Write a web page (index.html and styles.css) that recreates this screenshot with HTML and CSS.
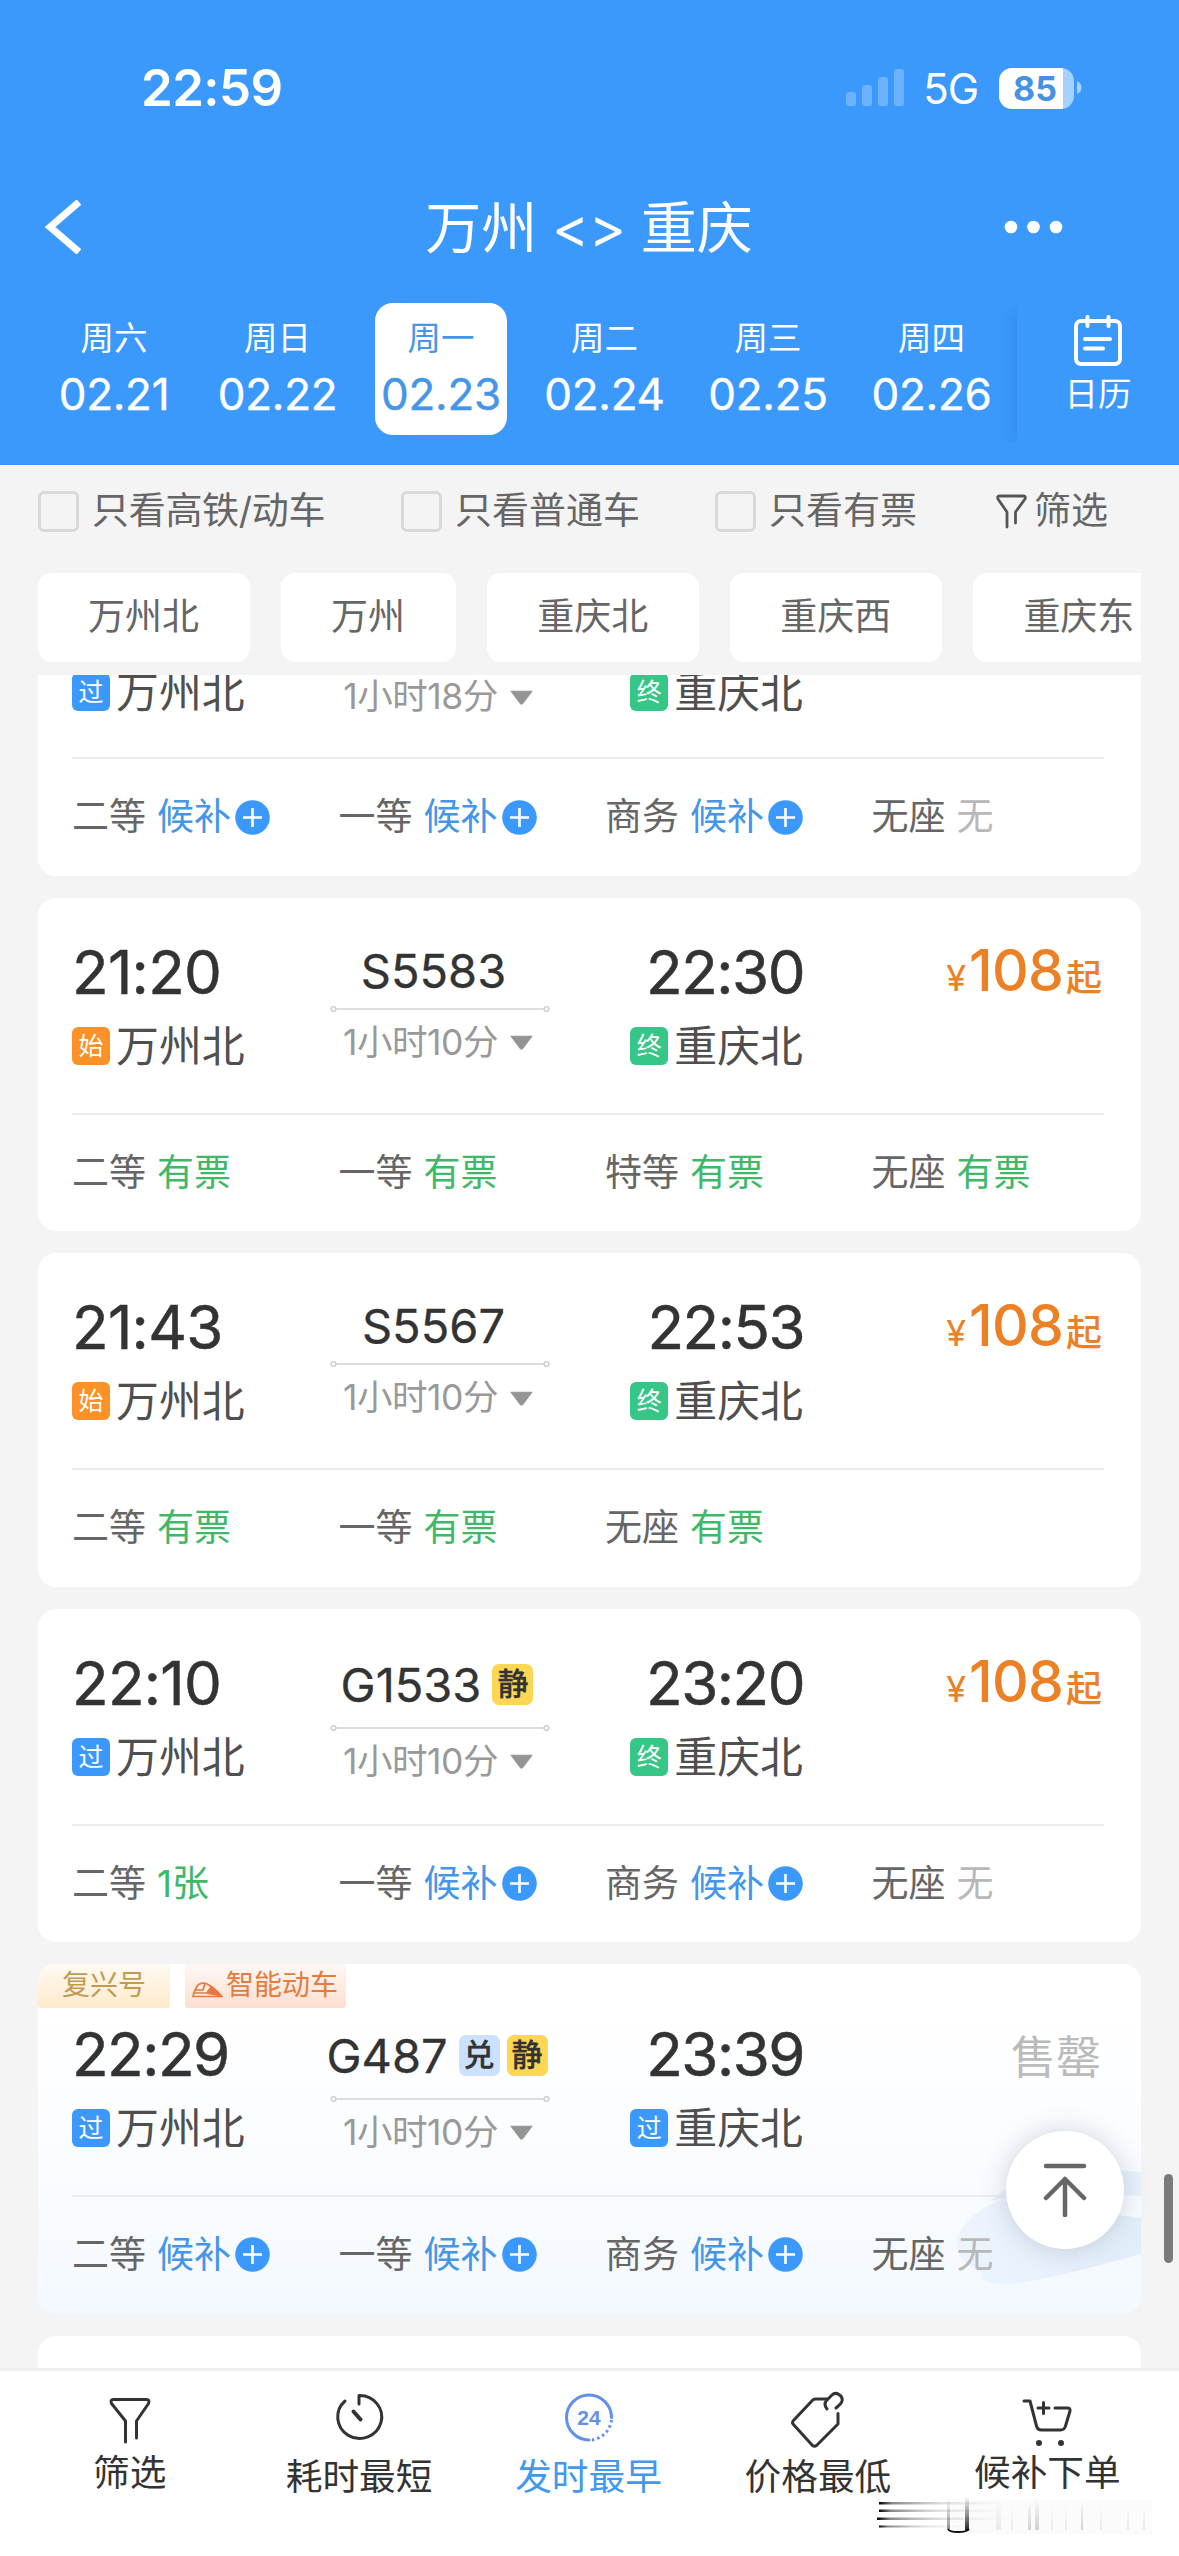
FILE: index.html
```html
<!DOCTYPE html>
<html lang="zh-CN">
<head>
<meta charset="utf-8">
<title>万州 &lt;&gt; 重庆</title>
<link rel="stylesheet" href="styles.css">
</head>
<body>
<svg class="defs" width="0" height="0">
  <symbol id="plus" viewBox="0 0 35 35"><circle cx="17.500" cy="17.500" r="17.300" fill="#3b99fc"/><path d="M8 17.500h19M17.500 8v19" stroke="#fff" stroke-width="2.600"/></symbol>
  <symbol id="rail" viewBox="0 0 220 8"><path d="M6 4h208" stroke="#d2d2d2" stroke-width="1.600"/><g fill="#fff" stroke="#cdcdcd" stroke-width="1.400"><circle cx="3.500" cy="4" r="2.400"/><circle cx="216.500" cy="4" r="2.400"/></g></symbol>
  <symbol id="tri" viewBox="0 0 22 14"><path d="M1 1h20L12 12.800q-1 1-2 0z" fill="#949494" stroke="#949494" stroke-linejoin="round"/></symbol>
</svg>
<div class="screen">
  <header class="header">
    <div class="status">
      <span class="clock">22:59</span>
      <div class="signals">
        <svg width="59" height="38" viewBox="0 0 59 38" fill="#6cb2ff"><rect y="23" width="10" height="14" rx="3"/><rect x="16" y="16" width="10" height="21" rx="3"/><rect x="32" y="8" width="10" height="29" rx="3"/><rect x="48" width="10" height="37" rx="3"/></svg>
        <span class="net">5G</span>
        <span class="battery"><span class="charge">85</span></span>
        <svg class="nub" width="5" height="14" viewBox="0 0 5 14"><path d="M0 0q4.500 2 4.500 6.500T0 13z" fill="#a5d0ff"/></svg>
      </div>
    </div>
    <div class="titlebar">
      <svg class="back" width="38" height="54" viewBox="0 0 38 54"><path d="M34 2 5 27l29 25" fill="none" stroke="#fff" stroke-width="7"/></svg>
      <h1>万州 &lt;&gt; 重庆</h1>
      <svg class="more" width="60" height="16" viewBox="0 0 60 16" fill="#fff"><circle cx="7" cy="8" r="6.300"/><circle cx="29.500" cy="8" r="6.300"/><circle cx="52" cy="8" r="6.300"/></svg>
    </div>
    <div class="dates">
      <div class="day"><span>周六</span><b>02.21</b></div>
      <div class="day"><span>周日</span><b>02.22</b></div>
      <div class="day on"><span>周一</span><b>02.23</b></div>
      <div class="day"><span>周二</span><b>02.24</b></div>
      <div class="day"><span>周三</span><b>02.25</b></div>
      <div class="day"><span>周四</span><b>02.26</b></div>
      <div class="calendar">
        <svg width="50" height="54" viewBox="0 0 50 54" fill="none" stroke="#fff" stroke-width="4" stroke-linecap="round"><rect x="3" y="9" width="44" height="43" rx="5"/><path d="M14.500 5v9M35.500 5v9"/><path d="M12 27h25M12 36.500h18"/></svg>
        <span>日历</span>
      </div>
    </div>
  </header>

  <div class="filters">
    <label class="f1"><i></i>只看高铁/动车</label>
    <label class="f2"><i></i>只看普通车</label>
    <label class="f3"><i></i>只看有票</label>
    <div class="sift"><svg width="31" height="35" viewBox="0 0 31 35" fill="none" stroke="#555" stroke-width="2.800" stroke-linecap="round" stroke-linejoin="round"><path d="M11 33V18L2 5q-1-3 1.500-3h24q2.500 0 1.500 3L19.500 18v11"/></svg>筛选</div>
  </div>
  <div class="chips"><span>万州北</span><span>万州</span><span>重庆北</span><span>重庆西</span><span>重庆东</span></div>

  <main class="list">
    <section class="card first">
      <div class="trip">
        <div class="from"><div class="station"><i class="pass">过</i>万州北</div></div>
        <div class="mid"><div class="dur">1小时18分<svg width="23" height="15"><use href="#tri"/></svg></div></div>
        <div class="to"><div class="station"><i class="end">终</i>重庆北</div></div>
      </div>
      <div class="seats"><div>二等<em class="wait">候补<svg><use href="#plus"/></svg></em></div><div>一等<em class="wait">候补<svg><use href="#plus"/></svg></em></div><div>商务<em class="wait">候补<svg><use href="#plus"/></svg></em></div><div>无座<em class="none">无</em></div></div>
    </section>

    <section class="card">
      <div class="trip">
        <div class="from"><div class="time wide">21:20</div><div class="station"><i class="start">始</i>万州北</div></div>
        <div class="mid"><div class="no">S5583</div><svg class="rail"><use href="#rail"/></svg><div class="dur">1小时10分<svg width="23" height="15"><use href="#tri"/></svg></div></div>
        <div class="to"><div class="time">22:30</div><div class="station"><i class="end">终</i>重庆北</div></div>
        <div class="price"><small>¥</small>108<sub>起</sub></div>
      </div>
      <div class="seats"><div>二等<em class="have">有票</em></div><div>一等<em class="have">有票</em></div><div>特等<em class="have">有票</em></div><div>无座<em class="have">有票</em></div></div>
    </section>

    <section class="card">
      <div class="trip">
        <div class="from"><div class="time wide">21:43</div><div class="station"><i class="start">始</i>万州北</div></div>
        <div class="mid"><div class="no">S5567</div><svg class="rail"><use href="#rail"/></svg><div class="dur">1小时10分<svg width="23" height="15"><use href="#tri"/></svg></div></div>
        <div class="to"><div class="time">22:53</div><div class="station"><i class="end">终</i>重庆北</div></div>
        <div class="price"><small>¥</small>108<sub>起</sub></div>
      </div>
      <div class="seats"><div>二等<em class="have">有票</em></div><div>一等<em class="have">有票</em></div><div>无座<em class="have">有票</em></div></div>
    </section>

    <section class="card">
      <div class="trip">
        <div class="from"><div class="time wide">22:10</div><div class="station"><i class="pass">过</i>万州北</div></div>
        <div class="mid tagged"><div class="no">G1533<i class="quiet">静</i></div><svg class="rail"><use href="#rail"/></svg><div class="dur">1小时10分<svg width="23" height="15"><use href="#tri"/></svg></div></div>
        <div class="to"><div class="time">23:20</div><div class="station"><i class="end">终</i>重庆北</div></div>
        <div class="price"><small>¥</small>108<sub>起</sub></div>
      </div>
      <div class="seats"><div>二等<em class="have">1张</em></div><div>一等<em class="wait">候补<svg><use href="#plus"/></svg></em></div><div>商务<em class="wait">候补<svg><use href="#plus"/></svg></em></div><div>无座<em class="none">无</em></div></div>
    </section>

    <section class="card smart">
      <svg class="train" width="190" height="130" viewBox="0 0 190 130">
        <defs><linearGradient id="body"><stop offset="0" stop-color="#edf4fe"/><stop offset="1" stop-color="#e2edfb"/></linearGradient></defs>
        <path d="M60 30Q110 8 190 16v24Q110 36 40 44z" fill="#e8f1fc"/><path d="M6 82Q18 56 50 44L190 62v36Q90 126 56 128q-30 0-24-10Q2 104 6 82z" fill="url(#body)"/></svg>
      <div class="labels"><span class="fx">复兴号</span><span class="zn"><svg width="31" height="16" viewBox="0 0 31 16" fill="none" stroke="#e57b3c" stroke-width="1.700"><path d="M1 14.500h29Q22 5 14 1.500 7 0 4 6 2 10 1 14.500z"/><path d="M3 8h8l2-6M2 11h13" /><path d="M15 9l4-5q7 4 10 10.500L15 12z" fill="#e57b3c" stroke="none"/></svg>智能动车</span></div>
      <div class="trip">
        <div class="from"><div class="time">22:29</div><div class="station"><i class="pass">过</i>万州北</div></div>
        <div class="mid tagged"><div class="no">G487<i class="swap">兑</i><i class="quiet">静</i></div><svg class="rail"><use href="#rail"/></svg><div class="dur">1小时10分<svg width="23" height="15"><use href="#tri"/></svg></div></div>
        <div class="to"><div class="time">23:39</div><div class="station"><i class="pass">过</i>重庆北</div></div>
        <div class="soldout">售罄</div>
      </div>
      <div class="seats"><div>二等<em class="wait">候补<svg><use href="#plus"/></svg></em></div><div>一等<em class="wait">候补<svg><use href="#plus"/></svg></em></div><div>商务<em class="wait">候补<svg><use href="#plus"/></svg></em></div><div>无座<em class="none">无</em></div></div>
    </section>
    <section class="card"></section>
  </main>

  <nav class="tabs">
    <div class="tab hi"><svg width="60" height="60" viewBox="0 0 60 60"><path d="M25.500 51V30L11.500 12.500Q10 8.500 13.500 8.500h33q3.500 0 2 4L36.500 30v17" /></svg><span>筛选</span></div>
    <div class="tab"><svg width="60" height="60" viewBox="0 0 60 60"><path d="M16 10A22 21.500 0 1 0 30 4.500V13"/><path d="m24.500 20.500 7 8" stroke-width="4"/></svg><span>耗时最短</span></div>
    <div class="tab on"><svg width="60" height="60" viewBox="0 0 60 60"><path d="M30 49A22.500 22.500 0 1 1 52.500 26.500" stroke="#628fea"/><path d="M52.500 29A22.500 22.500 0 0 1 32 49" stroke="#628fea" stroke-dasharray="2.500 3" stroke-linecap="butt"/><text x="30" y="33.500" text-anchor="middle">24</text></svg><span>发时最早</span></div>
    <div class="tab"><svg width="60" height="60" viewBox="0 0 60 60"><path d="M39 8H27.500q-2 0-3 1.200L5 30q-1 1.500 0 3l19.500 21.500q2 1.500 4 0L50 33V22.500"/><path d="M39 18q-4-5 0-9l5-5q3-3 7-.5t3 6.500q0 2-6 7"/></svg><span>价格最低</span></div>
    <div class="tab hi"><svg width="60" height="60" viewBox="0 0 60 60"><path d="M7 10h6l6.500 25q1 4 5 4h19q4 0 5-4L53 20q.5-3-2.500-3H38M26.500 11.500v11M21 17h11"/><g fill="#333" stroke="none"><circle cx="22" cy="52" r="3"/><circle cx="44" cy="52" r="3"/></g></svg><span>候补下单</span></div>
  </nav>

  <svg class="smear" width="285" height="46" viewBox="0 0 285 46">
    <defs>
      <linearGradient id="h"><stop offset="0" stop-color="#000"/><stop offset=".1" stop-color="#888"/><stop offset=".5" stop-color="#ccc" stop-opacity=".6"/><stop offset="1" stop-color="#ddd" stop-opacity="0"/></linearGradient>
      <linearGradient id="v" x2="0" y2="1"><stop offset="0" stop-color="#555" stop-opacity="0"/><stop offset="1" stop-color="#222"/></linearGradient>
      <linearGradient id="g" x2="0" y2="1"><stop offset="0" stop-color="#999" stop-opacity="0"/><stop offset="1" stop-color="#aaa" stop-opacity=".5"/></linearGradient>
      <linearGradient id="k" x2="0" y2="1"><stop offset="0" stop-color="#aaa" stop-opacity="0"/><stop offset="1" stop-color="#bbb" stop-opacity=".25"/></linearGradient>
    </defs>
    <rect x="75" y="6" width="200" height="34" fill="#777" fill-opacity=".03"/>
    <g fill="url(#h)"><rect x="2" y="8" width="130" height="2.500"/><rect x="2" y="15.500" width="120" height="2.500"/><rect x="0" y="23.500" width="130" height="2.500"/><rect x="2" y="31.500" width="90" height="2"/></g>
    <rect x="70" y="4" width="3" height="31" fill="url(#v)" opacity=".5"/><rect x="88" y="2" width="4" height="34" fill="url(#v)"/>
    <path d="M71 35q1 3 10 3t11-3" fill="none" stroke="#111" stroke-width="2"/>
    <g fill="url(#k)"><rect x="119" y="8" width="5" height="28"/><rect x="134" y="12" width="2" height="24"/><rect x="174" y="12" width="2" height="24"/><rect x="188" y="12" width="2" height="24"/><rect x="223" y="12" width="2" height="24"/><rect x="250" y="12" width="2" height="24"/><rect x="266" y="12" width="2" height="24"/></g>
    <g fill="url(#g)"><rect x="151" y="8" width="3" height="28"/><rect x="158" y="6" width="4" height="30"/><rect x="204" y="7" width="2" height="29"/></g>
  </svg>
  <div class="totop"><svg width="44" height="54" viewBox="0 0 44 54" fill="none" stroke="#666" stroke-width="4.500" stroke-linecap="round" stroke-linejoin="round"><path d="M3 3h38M22 16v36M3 35l19-19 19 19"/></svg></div>
  <div class="scrollbar"></div>
</div>
</body>
</html>
```
FILE: styles.css
```css
* { box-sizing: border-box; margin: 0; padding: 0; }
body { font-family: Inter, "Noto Sans CJK SC", sans-serif; background: #f4f4f4; }
i, em { font-style: normal; }
svg { display: block; flex: none; }
.defs { position: absolute; }
.screen { position: relative; width: 1179px; height: 2556px; overflow: hidden; display: flex; flex-direction: column; }

.header { height: 465px; background: #3b99fc; color: #fff; flex: none; }
.status { height: 176px; padding: 0 97px 0 141px; display: flex; justify-content: space-between; }
.clock { font-size: 51px; line-height: 176px; font-weight: 600; letter-spacing: -0.6px; }
.signals { display: flex; align-items: center; height: 176px; }
.net { font-size: 42px; line-height: 50px; margin: 2px 21px 0 18px; letter-spacing: -1px; }
.battery { width: 75px; height: 41px; border-radius: 13px; background: linear-gradient(90deg, #fff 64px, #a5d0ff 64px); }
.charge { display: block; font-size: 34px; font-weight: 700; line-height: 41px; color: #4592e4; padding-left: 14px; letter-spacing: 0; }
.nub { margin: 0 0 0 3px; }
.titlebar { height: 102px; display: flex; align-items: center; justify-content: space-between; padding: 0 115px 0 45px; }
.titlebar h1 { font-size: 56px; font-weight: 400; line-height: 102px; white-space: nowrap; padding: 1px 0 0 91px; word-spacing: -1px; }
.dates { display: flex; padding: 25px 0 0 48px; }
.day { width: 132px; height: 132px; margin-right: 31.500px; flex: none; border-radius: 18px; text-align: center; padding-top: 14px; }
.day span, .calendar span { display: block; font-size: 33.500px; line-height: 42px; }
.day b { display: block; font-weight: 400; font-size: 44px; line-height: 52px; padding-top: 9px; letter-spacing: -0.3px; white-space: nowrap; margin: 0 -10px; -webkit-text-stroke: .4px; }
.day.on { background: #fff; color: #4596e8; }
.calendar { flex: 1; height: 140px; margin-left: -12px; padding: 9px 0 0; background: #3b99fc; box-shadow: -8px 4px 14px -5px rgba(20,80,150,.2); display: flex; flex-direction: column; align-items: center; clip-path: inset(0 0 0 -30px); }
.calendar span { padding-top: 7px; }

.filters { height: 108px; padding: 0 38px; flex: none; display: flex; align-items: flex-start; color: #666; font-size: 37px; line-height: 92px; white-space: nowrap; }
.filters label, .sift { display: flex; align-items: center; }
.filters i { width: 41px; height: 41px; border: 3px solid #d9d9d9; border-radius: 6px; margin-right: 13px; }
.f1 { width: 363px; letter-spacing: -.3px; }
.f2 { width: 314px; }
.f3 { width: 281px; }
.sift svg { margin-right: 7px; }
.chips { height: 102px; margin: 0 38px; flex: none; display: flex; gap: 31.500px; overflow: hidden; white-space: nowrap; }
.chips span { flex: none; height: 89px; line-height: 88px; padding: 0 50.600px 0 50px; font-size: 37px; color: #666; background: #fff; border-radius: 14px; }

.list { height: 1693px; flex: none; overflow: hidden; padding: 0 38px; display: flex; flex-direction: column; gap: 21.900px; }
.card { flex: none; height: 333.600px; background: #fff; border-radius: 18px; padding: 0 37px 0 34px; position: relative; }
.card.first { height: 201px; border-radius: 0 0 18px 18px; overflow: hidden; }
.first .trip { height: 84px; padding-top: 0; }
.first .station { margin-top: -9px; }
.first .mid { padding-top: 0; }
.first .dur { margin-top: -2px; }
.trip { height: 217px; padding-top: 38px; border-bottom: 2px solid #ececec; display: grid; grid-template-columns: 258px 219px 255px 1fr; align-items: start; position: relative; }
.time { font-size: 60px; line-height: 72px; color: #333; letter-spacing: -1.500px; -webkit-text-stroke: .5px; }
.time.wide { letter-spacing: -.7px; }
.to { text-align: right; display: flex; flex-direction: column; align-items: flex-end; }
.station { display: flex; align-items: center; font-size: 42.900px; line-height: 52px; color: #4f4f4f; white-space: nowrap; margin-top: 12px; }
.station i { width: 38px; height: 38px; border-radius: 6px; color: #fff; font-size: 25px; line-height: 38px; text-align: center; margin-right: 6px; }
.to .station { padding-right: 1px; }
.pass { background: #3b99fc; }
.start { background: #fb9127; }
.end { background: #36c687; }
.mid { display: flex; flex-direction: column; align-items: center; }
.no { font-size: 47px; line-height: 56px; margin-top: 7px; padding-right: 12px; color: #333; letter-spacing: 0; display: flex; align-items: center; -webkit-text-stroke: .3px; }
.rail { width: 220px; height: 8px; margin-top: 6px; }
.dur { display: flex; align-items: center; color: #999; font-size: 35.500px; line-height: 48px; margin-top: 6px; white-space: nowrap; letter-spacing: -.5px; padding-right: 3px; }
.dur svg { margin-left: 12px; }
.tagged .no { margin-top: 10px; padding-right: 5px; }
.tagged .rail { margin-top: 11px; }
.no i { width: 41px; height: 41px; border-radius: 7px; font-size: 31px; line-height: 40px; text-align: center; letter-spacing: 0; font-weight: 500; margin-left: 11px; }
.no .quiet { background: #fdd754; }
.no .swap { background: #cbe1fd; }
.no .swap + .quiet { margin-left: 7px; }
.price { justify-self: end; color: #ec8024; font-size: 57px; line-height: 70px; letter-spacing: -.8px; font-weight: 500; white-space: nowrap; display: flex; align-items: baseline; padding-right: 2px; }
.price small { font-size: 36px; font-weight: 400; margin-right: 3px; letter-spacing: 0; }
.price sub { font-size: 36px; font-weight: 500; margin-left: 3px; letter-spacing: 0; }
.seats { display: flex; font-size: 37px; line-height: 46px; padding-top: 35px; color: #666; position: relative; }
.seats > div { width: 266.500px; flex: none; display: flex; white-space: nowrap; }
.seats em { margin-left: 11px; display: flex; align-items: center; }
.seats em svg { width: 35px; height: 35px; margin-left: 4px; }
.wait { color: #4596e8; }
.have { color: #3fb868; }
.none { color: #b8b8b8; }

.smart { height: 349.500px; background: linear-gradient(#fff 15%, #f4f9ff); padding-top: 15.500px; }
.train { position: absolute; right: 0; bottom: 28px; }
.labels { position: absolute; left: 0; top: 0; display: flex; gap: 15px; font-size: 28px; line-height: 42px; }
.labels span { height: 44px; display: flex; align-items: center; padding-bottom: 2px; }
.fx { width: 132px; justify-content: center; color: #c29b52; background: linear-gradient(#fffaf2, #fdebcb); border-radius: 18px 0 3px 3px; }
.zn { width: 161px; padding-left: 7px; color: #e57b3c; background: linear-gradient(#fff8f5, #fcdfd0); border-radius: 0 0 3px 3px; }
.zn svg { margin: 10px 3px 0 0; }
.soldout { justify-self: end; font-size: 45px; line-height: 79px; color: #bbb; padding-right: 3px; }

.tabs { flex: 1; background: #fff; border-top: 3px solid #efefef; display: flex; padding: 20px 17px 0 15px; }
.tab { flex: 1; display: flex; flex-direction: column; align-items: center; color: #333; font-size: 36.700px; line-height: 46px; }
.tab svg { fill: none; stroke: #333; stroke-width: 3; stroke-linecap: round; stroke-linejoin: round; }
.tab text { font: 700 21px "Liberation Sans", sans-serif; fill: #628fea; stroke: none; }
.tab span { margin-top: 3px; }
.tab.hi span { margin-top: -1px; }
.tab.on { color: #4298f0; }

.totop { position: absolute; left: 1006px; top: 2131px; width: 118px; height: 118px; border-radius: 50%; background: #fff; box-shadow: 0 0 26px rgba(80,90,110,.25); display: flex; align-items: center; justify-content: center; }
.scrollbar { position: absolute; left: 1164px; top: 2174px; width: 9px; height: 89px; border-radius: 5px; background: #7b7b7b; }
.smear { position: absolute; left: 877px; top: 2494px; }
```
